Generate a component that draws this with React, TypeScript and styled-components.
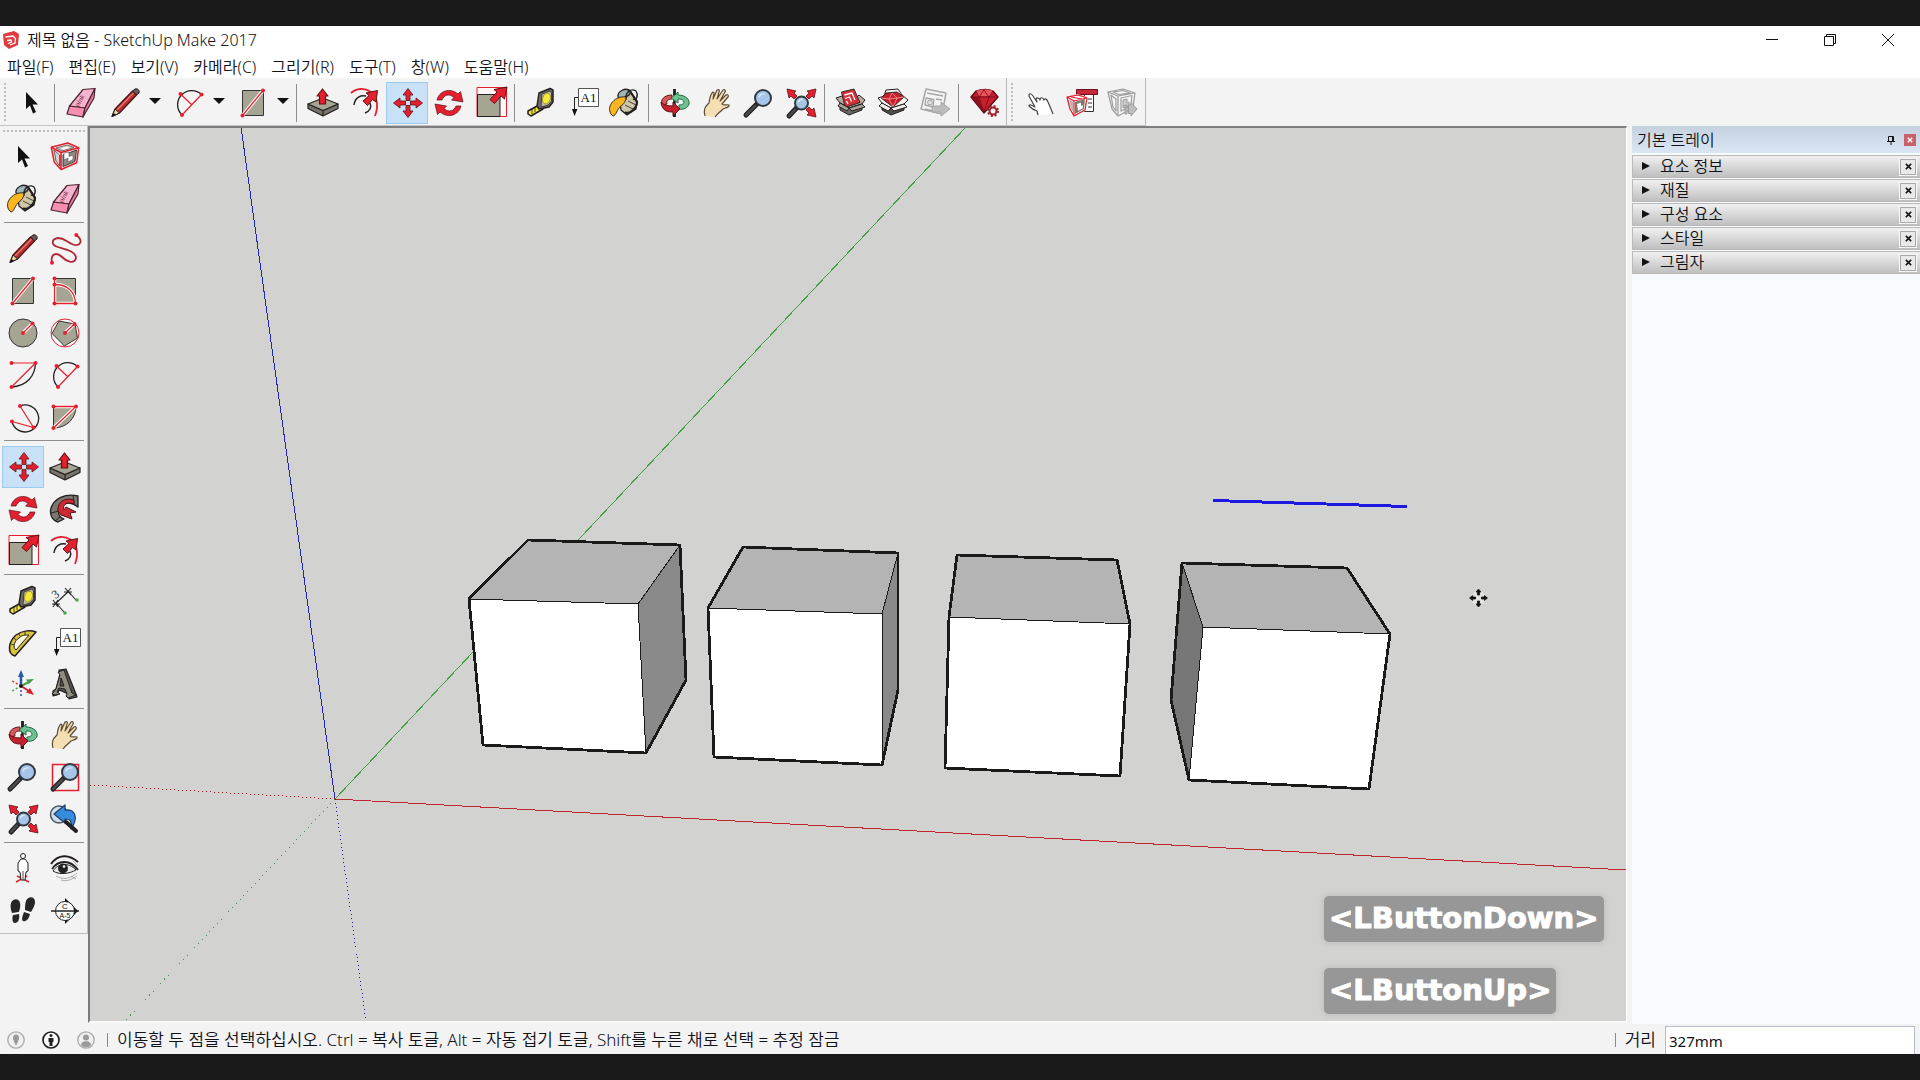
import React from "react";
import styled, { createGlobalStyle } from "styled-components";

const GlobalStyle = createGlobalStyle`
  *, *::before, *::after { box-sizing: border-box; }
  body { margin: 0; background: #1a1a1a; }
  button, input { font: inherit; color: inherit; }
`;

const RED = "#e5202e";
const DARK = "#231f20";
const CLAY = "#a6a493";

/* ---------- icons ---------- */

const Svg = styled.svg`
  display: block;
  width: 32px;
  height: 32px;
  overflow: visible;
`;

const Dots = ({ at, r = 2 }: { at: number[][]; r?: number }) => (
  <g fill={RED}>
    {at.map(([x, y]) => (
      <circle key={`${x}-${y}`} cx={x} cy={y} r={r} />
    ))}
  </g>
);

const Lens = ({ x = 20, y = 11, r = 8, hx = 3, hy = 28 }) => (
  <g>
    <path d={`M${x - r * 0.7} ${y + r * 0.7}L${hx} ${hy}`} stroke={DARK} strokeWidth="5" strokeLinecap="round" />
    <path d={`M${x - r * 0.7 - 2} ${y + r * 0.7 + 2}L${hx} ${hy}`} stroke="#4b4b4d" strokeWidth="2.5" strokeLinecap="round" />
    <circle cx={x} cy={y} r={r} fill="#a5c6e8" stroke="#33383f" strokeWidth="2" />
    <path d={`M${x - r * 0.5} ${y - r * 0.1}A${r * 0.6} ${r * 0.6} 0 0 1 ${x + r * 0.2} ${y - r * 0.5}`} stroke="#d7e7f6" strokeWidth="1.5" fill="none" />
  </g>
);

const arrowUp = "M16 1.5L21 8H18V13.5H14V8H11Z";

const icons: Record<string, React.ReactNode> = {
  select: <path d="M11 5V22L15 18.500L18 26.500L21 25L17.500 17.500H23Z" fill="#111" />,
  component: (
    <g strokeLinejoin="round">
      <path d="M2.300 6.300L18.700 2L29.700 6.700L27.700 21.700L12 28.500L5.300 21.300Z" fill="#f4e9e9" stroke={RED} strokeWidth="1.500" />
      <path d="M14 14L27.500 9L26 20.500L14 25.500Z" fill="#8e8b84" stroke={DARK} strokeWidth=".8" />
      <path d="M15 12V19L19 17V21L24 18.500V14L20 15.500V11Z" fill="#fff" stroke="#555" strokeWidth=".6" />
      <path d="M5 9L10.500 14L10.500 25L7 20Z" fill="#d9d4ce" stroke="#444" strokeWidth=".8" />
      <path d="M7 7L18 4L25 6.500L13 10Z" fill="#c9c6bf" stroke="#444" strokeWidth=".7" />
      <path d="M12 7L18 5.500L21 7L14 9Z" fill="#fff" />
      <path d="M2.300 6.300L12 11.500L29.700 6.700M12 11.500V28.500" fill="none" stroke={RED} strokeWidth="1.700" />
    </g>
  ),
  paint: (
    <g stroke={DARK} strokeLinejoin="round">
      <path d="M10 8L14 4L20 3L28 14L27 22L18 28L12 23Z" fill="#cfc7a8" strokeWidth="1.300" />
      <path d="M9 10C8 4 17 0 21 4C23 8 14 13 9 10Z" fill="#9db5b3" strokeWidth="1.300" />
      <path d="M21 4L28 15C28 22 19 28 16 25" fill="none" strokeWidth="2.200" />
      <path d="M17 13C16 5 22 1 27 4C30 9 27 14 24 12" fill="none" strokeWidth="1.300" />
      <path d="M17 10C11 9 5 12 2 17C-1 22 1 27 4 29C7 29 8 22 12 19C15 17 17 14 17 10Z" fill="#fbb521" strokeWidth=".9" />
      <path d="M16 18L24 22M19 14L27 18" strokeWidth=".8" fill="none" />
    </g>
  ),
  eraser: (
    <g stroke="#4a2430" strokeWidth="1.200" strokeLinejoin="round">
      <path d="M4.500 19L18 2.500L30 1.500L20 21Z" fill="#f6b3cd" />
      <path d="M4.500 19L20 21L18 30L2 27Z" fill="#f78fb3" />
      <path d="M20 21L30 1.500L29 11L18 30Z" fill="#e2799f" />
      <text x="9" y="18" fontSize="7" fontFamily="'Liberation Serif', serif" fontStyle="italic" stroke="none" fill="#6c2038" transform="rotate(-60 13 15)">pink</text>
    </g>
  ),
  pencil: (
    <g strokeLinejoin="round">
      <path d="M3 29.500L6 22L23.500 4L27.500 8L10.500 26Z" fill="#b92f2f" stroke="#4d1214" strokeWidth="1.200" />
      <path d="M8 23L24.500 6" stroke="#e97b70" strokeWidth="1.200" />
      <path d="M3 29.500L6 22L10.500 26Z" fill="#e8d3a1" stroke={DARK} />
      <path d="M3 29.500L4.500 26L7 28Z" fill="#111" />
      <path d="M23.500 4L26 2C29 1 31 4 30 6L27.500 8Z" fill="#6a5858" stroke={DARK} />
    </g>
  ),
  freehand: (
    <g>
      <path d="M27.300 2C35 8 31 14 24 11.500C17 9 16 5 9 5C2 6 2 12 9 14C15 16 27 18 27 25C25 32 17 28 13 24C8 19 1 20 3 29.700" fill="none" stroke="#b32634" strokeWidth="1.800" />
      <Dots at={[[27.3, 2], [3, 29.7]]} />
    </g>
  ),
  rect: (
    <g>
      <path d="M5.500 3.500H26.500V28.500H5.500Z" fill={CLAY} stroke="#333" />
      <path d="M26 3.500L5.500 28.500" stroke="#fff" strokeWidth="3.500" />
      <path d="M26 3.500L5.500 28.500" stroke={RED} strokeWidth="1.300" />
      <Dots at={[[26, 3.5], [5.5, 28.5]]} />
    </g>
  ),
  rotrect: (
    <g fill="none">
      <path d="M5.500 3.500H26.500V28.500H5.500Z" fill={CLAY} stroke="#333" />
      <path d="M5.500 9.500C19 9.500 26 17 26.500 28.500H5.500V4" stroke="#fff" strokeWidth="3.500" />
      <path d="M5.500 9.500C19 9.500 26 17 26.500 28.500H5.500V4" stroke={RED} strokeWidth="1.300" />
      <Dots at={[[5.5, 3.5], [5.5, 9.5], [5.5, 28.5], [26.5, 28.5]]} />
    </g>
  ),
  circle: (
    <g>
      <circle cx="16" cy="16" r="14" fill={CLAY} stroke="#333" />
      <path d="M16 16L25.500 6.500" stroke="#fff" strokeWidth="3.500" />
      <path d="M16 16L25.500 6.500" stroke={RED} strokeWidth="1.300" />
      <Dots at={[[16, 16], [25.5, 6.5]]} />
    </g>
  ),
  polygon: (
    <g>
      <circle cx="16" cy="16" r="14" fill="#fff" stroke={RED} />
      <path d="M10 4L26 7L28.500 21L15.500 29L3 16.500Z" fill={CLAY} stroke="#333" />
      <path d="M16 16L25.500 7" stroke="#fff" strokeWidth="3.500" />
      <path d="M16 16L25.500 7" stroke={RED} strokeWidth="1.300" />
      <Dots at={[[16, 16], [25.5, 7]]} />
    </g>
  ),
  arc: (
    <g fill="none">
      <path d="M28.500 4C28 17 20 27 4.500 28" stroke={DARK} strokeWidth="1.300" />
      <path d="M4.500 4H28.500L4.500 28" stroke={RED} strokeWidth="1.200" />
      <Dots at={[[4.5, 4], [28.5, 4], [4.5, 28]]} />
    </g>
  ),
  arc2: (
    <g fill="none">
      <path d="M28.500 7.500A14 14 0 1 0 9 28" stroke={DARK} strokeWidth="1.300" />
      <path d="M28.500 7.500L9 28M7.500 7L18.500 17.500" stroke={RED} strokeWidth="1.200" />
      <Dots at={[[28.5, 7.5], [9, 28], [7.5, 7]]} />
    </g>
  ),
  arc3: (
    <g fill="none">
      <path d="M13 5A13.500 13.500 0 1 1 5 20.500" stroke={DARK} strokeWidth="1.300" />
      <path d="M13 5L26.500 26.500L5 20.500" stroke={RED} strokeWidth="1.200" />
      <Dots at={[[13, 5], [5, 20.5], [26.5, 26.5]]} />
    </g>
  ),
  pie: (
    <g>
      <path d="M4.500 5.500H27C27 17 18 27 4.500 27Z" fill={CLAY} stroke="#333" />
      <path d="M4.500 5.500H27L4.500 27" fill="none" stroke="#fff" strokeWidth="3.500" />
      <path d="M4.500 5.500H27L4.500 27" fill="none" stroke={RED} strokeWidth="1.300" />
      <Dots at={[[4.5, 5.5], [27, 5.5], [4.5, 27]]} />
    </g>
  ),
  move: (
    <g fill={RED} stroke="#5d1016" strokeWidth=".8" transform="translate(1 0)">
      {[0, 90, 180, 270].map((a) => (
        <path key={a} d={arrowUp} transform={`rotate(${a} 16 16)`} />
      ))}
    </g>
  ),
  pushpull: (
    <g stroke={DARK} strokeWidth="1.200" strokeLinejoin="round">
      <path d="M1 17L16 23.500L31 17V21.500L16 29L1 21.500Z" fill="#77756a" />
      <path d="M16 23.500V29" />
      <path d="M1 17L16 11L31 17L16 23.500Z" fill={CLAY} />
      <path d="M15.500 2L21 9H18.500V17H12.500V9H10Z" fill={RED} stroke="#5d1016" />
    </g>
  ),
  rotate: (
    <g fill={RED} stroke="#5d1016" strokeWidth=".7" strokeLinejoin="round">
      <path d="M4 13C6 4 17 0 25 7L27.500 4.500L30 15L18.500 13L21 10.500C16 6 11 8 9 13Z" />
      <path d="M28 19C26 28 15 32 7 25L4.500 27.500L2 17L13.500 19L11 21.500C16 26 21 24 23 19Z" />
    </g>
  ),
  followme: (
    <g strokeLinejoin="round">
      <path d="M29 3C17 0 4 5 1.500 17C1 23 4 28 9 29L15 26C9 24 8 18 12 13C17 8 24 10 29 14Z" fill="#79786f" stroke={DARK} strokeWidth="1.300" />
      <path d="M24 2L25 12M2 20L10 18M6 28L12 23" stroke={DARK} strokeWidth="1" />
      <path d="M25 7C16 4 8 9 9 18L12 22L23 26L21 20L27 19L17 14L15 17C13 12 18 8 25 11Z" fill="#cf2a31" stroke="#541015" />
    </g>
  ),
  scale: (
    <g>
      <path d="M2 .5H31.500V29.500H2Z" fill="#fff6f6" stroke={RED} />
      <path d="M2.500 7.500H25V29.500H2.500Z" fill={CLAY} stroke="#222" />
      <path d="M32 0L29.500 12L26 9L19.500 16.500L15 12.500L22 5L19 2.500Z" fill={RED} stroke="#5d1016" strokeLinejoin="round" />
    </g>
  ),
  offset: (
    <g fill="none">
      <path d="M2 6C13 -4 35 5 26 29" stroke={RED} strokeWidth="1.800" />
      <path d="M5 18C6 10 12 8 17 9M21 16C23 20 21 24 16 26" stroke={DARK} strokeWidth="1.500" />
      <path d="M28.500 3.500L27 15L23.500 12.500L18.500 18.500L14 14L20 8.500L17 6Z" fill={RED} stroke="#5d1016" strokeLinejoin="round" />
    </g>
  ),
  tape: (
    <g stroke={DARK} strokeLinejoin="round">
      <path d="M3 24L14 18L18 22L6 29L3 27Z" fill="#f2e33a" strokeWidth="1.500" />
      <path d="M7 22V27M10 20.500V25" strokeWidth=".8" />
      <path d="M14 6L25 1.500L28 3V15L24 20L14 22L12 19Z" fill="#6f6c66" strokeWidth="1.500" />
      <path d="M17 7L25 4L26.500 6V14L23 18L16 20Z" fill="#bdb9ac" strokeWidth=".7" />
      <ellipse cx="21.500" cy="11.500" rx="3.800" ry="5.500" fill="#f5ea3c" stroke="#9d941b" strokeWidth=".8" transform="rotate(18 21.500 11.500)" />
    </g>
  ),
  dimension: (
    <g stroke={DARK} fill="none">
      <path d="M5 20L20 6M7 18L15 27M18 5L27 15M3 19H11M4 15L9 22M4 22L9 15M15 7H23M16 3L22 10M16 10L22 3" strokeWidth="1.100" />
      <text x="3" y="12" fontSize="12" fontFamily="'Liberation Serif', serif" fill={DARK} stroke="none" transform="rotate(-38 8 8)">3</text>
      <g fill="#45a84f" stroke="none">
        <circle cx="28" cy="15" r="1.800" />
        <circle cx="16" cy="28" r="1.800" />
      </g>
    </g>
  ),
  protractor: (
    <g strokeLinejoin="round" stroke={DARK}>
      <path d="M29 5L8 29C0 27 1 15 9 8C16 3 24 3 29 5Z" fill="#d9c53a" strokeWidth="1.500" />
      <path d="M22 8L9 23C5 20 8 13 12 11C15 8 18 8 22 8Z" fill="#fffbe6" />
      <path d="M4 17L7 18M7 11L9 13M12 7L13 9M18 5V8" strokeWidth=".8" />
    </g>
  ),
  text: (
    <g>
      <path d="M11.500 1.500H31.500V19.500H11.500Z" fill="#fff" stroke="#555" />
      <path d="M11 10.500H7.500V24" fill="none" stroke={DARK} />
      <path d="M5 22H10.500L7.500 29Z" fill="#111" />
      <text x="21.500" y="15" fontSize="13" textAnchor="middle" fontFamily="'Liberation Serif', serif" fill="#111">A1</text>
    </g>
  ),
  axes: (
    <g strokeWidth="1.500" fill="none" transform="translate(-2 1)">
      <path d="M16 16V6" stroke="#2757a5" strokeWidth="2.500" />
      <path d="M13 7L16 0L19 7Z" fill="#2757a5" />
      <path d="M16 16L24 12" stroke="#43a047" strokeWidth="2" />
      <path d="M29 9L21 9.500L24 14Z" fill="#43a047" />
      <path d="M16 16L24 21" stroke="#d3232f" strokeWidth="2" />
      <path d="M29 25L21 22.500L25 18Z" fill="#d3232f" />
      <path d="M16 16V28" stroke="#2757a5" strokeDasharray="2 2" />
      <path d="M16 16L7 21" stroke="#43a047" strokeDasharray="2 2" />
      <path d="M16 16L7 11" stroke="#d3232f" strokeDasharray="2 2" />
      <circle cx="16" cy="16" r="1.800" fill="#111" />
    </g>
  ),
  text3d: (
    <g stroke={DARK} strokeLinejoin="round" fillRule="evenodd">
      <path d="M10 1L17 0L27 25L28 28L20 30V26L17 24L10 21L8 26L4 27V22L7 20L11 5Z" fill="#55544e" strokeWidth="1.200" />
      <path d="M9 3L15 1L23 24L27 26L19 29L17 27L18 25L16 20L10 19L8 23L11 25L6 26L3 25L7 20L11 6ZM12 9L11 17L15 17Z" fill="#8f8d80" strokeWidth="1" />
    </g>
  ),
  orbit: (
    <g strokeLinejoin="round" strokeWidth="1">
      <path d="M15.500 2V30" stroke="#222" strokeWidth="2.500" />
      <path d="M13 8C5 8 1 13 3 18L8 17C7 14 9 12 13 12Z" fill="#d9585c" stroke="#5a1317" />
      <path d="M12 11L19 5V8C27 8 31 13 30 17C29 21 24 23 20 22V18C24 18 25 16 25 15C24 12 22 12 19 12V16Z" fill="#6fc092" stroke="#1e6a3b" />
      <path d="M2 15C3 25 10 25 14 25V29L21 22L14 15V19C9 19 5 18 2 15Z" fill="#c6202e" stroke="#5a1317" />
      <path d="M15.500 2V8M15.500 27V30" stroke="#222" strokeWidth="2.500" />
    </g>
  ),
  pan: (
    <path
      d="M4 29C2 21 5 19 8 16C9 11 9 7 12 5L13 6L12 12L16 3C18 2 19 3 18 5L16 12L22 3C24 2 25 4 24 5L19 14L25 8C27 7 28 9 27 10L21 17C22 19 26 17 28 18C29 20 24 21 22 22C18 26 16 27 14 30"
      fill="#f4dfb3"
      stroke="#5c4a3a"
      strokeWidth="1.200"
      strokeLinejoin="round"
    />
  ),
  zoom: <Lens />,
  zoomwin: (
    <g>
      <path d="M3.500 3.500H29.500V29.500H3.500Z" fill="none" stroke={RED} strokeWidth="1.500" />
      <Lens x={21} y={11} hx={4} hy={28} />
    </g>
  ),
  zoomext: (
    <g>
      <Lens x={16.5} y={16} r={6.5} hx={4} hy={29} />
      <g fill={RED} stroke="#5d1016" strokeWidth=".8" strokeLinejoin="round">
        <path d="M2 2L11 4L9 6L12 9L9 12L6 9L4 11Z" />
        <path d="M31 2L22 4L24 6L21 9L24 12L27 9L29 11Z" />
        <path d="M31 30L22 28L24 26L21 23L24 20L27 23L29 21Z" />
      </g>
    </g>
  ),
  previous: (
    <g strokeLinejoin="round">
      <circle cx="10" cy="11.500" r="8.500" fill="#cfdeeb" stroke="#4c5661" strokeWidth="1.500" />
      <path d="M5 11L16 2V7C26 6 30 14 22 26C23 17 21 16 16 16V20Z" fill="#378bdd" stroke="#1b3d67" strokeWidth="1.200" />
      <path d="M17 19L27 28" stroke={DARK} strokeWidth="4" strokeLinecap="round" />
    </g>
  ),
  person: (
    <g fill="none" strokeLinejoin="round">
      <path d="M9 29L20 23M10 23L22 29" stroke={RED} strokeWidth="1.500" />
      <circle cx="16" cy="3" r="2.500" fill="#fff" stroke={DARK} />
      <path d="M14 6H18L21 10V18L19 19L18 27H14L13 19L11 18V10Z" fill="#fff" stroke={DARK} />
      <path d="M16 18V27" stroke={DARK} strokeWidth=".8" />
    </g>
  ),
  eye: (
    <g fill="none" stroke={DARK}>
      <path d="M2 11C9 1 20 1 29 9" strokeWidth="2" />
      <path d="M4 18C9 10 20 9 27 17C20 21 10 22 4 18Z" fill="#e8e8e8" strokeWidth="1" />
      <path d="M3 16C9 7 21 6 29 17" strokeWidth="1.800" />
      <circle cx="14" cy="15.500" r="4.500" fill="#222" />
      <circle cx="15" cy="13.500" r="1.300" fill="#fff" stroke="none" />
      <path d="M7 23C14 27 21 26 28 20M12 27C18 29 24 26 28 23M24 8L29 13M22 23L27 26" stroke="#999" strokeWidth=".8" />
    </g>
  ),
  feet: (
    <g fill="#262626">
      <path d="M4 8C6 3 12 3 13 8C14 12 12 16 12 17L5 18C4 15 3 12 4 8Z" />
      <path d="M6 20L12 19C13 24 11 28 8 28C5 28 5 23 6 20Z" />
      <path d="M19 6C21 1 28 1 28 7C28 11 25 15 24 17L18 15C18 12 18 9 19 6Z" />
      <path d="M17 17L23 19C22 24 19 27 16 26C14 24 16 20 17 17Z" />
      <path d="M6 19L12 18M17.500 16L23.500 18" stroke="#fff" strokeWidth=".8" />
    </g>
  ),
  section: (
    <g>
      <path d="M16 3L29 16L16 29Z" fill="#111" />
      <circle cx="16" cy="16" r="9.500" fill="#fff" stroke="#222" />
      <path d="M2 16H30" stroke="#222" strokeWidth="1.500" />
      <text x="16" y="14" fontSize="8" textAnchor="middle" fontFamily="'Liberation Sans', sans-serif" fill="#111">C</text>
      <text x="16" y="23" fontSize="7" textAnchor="middle" fontFamily="'Liberation Sans', sans-serif" fill="#111">A-5</text>
    </g>
  ),
  warehouse: (
    <g stroke={DARK} strokeLinejoin="round">
      <path d="M5 16L1 11L7 9L13 12L20 12L24 8L30 13L27 17L14 21Z" fill="#b3ada1" />
      <path d="M6.500 5L19 2L25 15.500L10 20.500Z" fill="#d4303a" strokeWidth=".9" />
      <path d="M9.500 8L17 6L20 13M10 11.500L14.500 10L16.500 14.500M13 17L11.500 14" fill="none" stroke="#fff" strokeWidth="1.300" />
      <path d="M5 16L14 21L27 17V23L14 28L5 23Z" fill="#6a665f" />
      <path d="M14 21L17 24L30 20L27 17Z" fill="#a9a397" />
      <path d="M5 16L3 19L12 24L14 21Z" fill="#a9a397" />
    </g>
  ),
  extension: (
    <g stroke={DARK} strokeLinejoin="round">
      <path d="M5 16L1 11L7 9L9 3L21 2L25 8L31 13L27 17L14 21Z" fill="#f7f5f1" />
      <path d="M4 11L9 6L20 5L27 10L16 20Z" fill="#c81f2d" strokeWidth=".9" />
      <path d="M4 11L12 12L20 11L27 10M12 12L16 20L20 11L15 6Z" fill="none" stroke="#ff9d9a" strokeWidth=".8" />
      <path d="M5 17L14 21L27 18V23L14 28L5 23Z" fill="#504d48" />
      <path d="M14 21L17 24L30 20L27 17Z" fill="#f1eee8" />
      <path d="M5 16L2 19L11 24L14 21Z" fill="#f1eee8" />
    </g>
  ),
  layout: (
    <g stroke="#a6a6a6" strokeLinejoin="round" fill="#f4f4f4">
      <path d="M7 2L27 6L23 27L2 22Z" strokeWidth="1.500" />
      <path d="M8 6L24 9M7 11L15 12.500L14 20L6 18ZM17 12L23 13M6 22L14 24" fill="none" strokeWidth="1.300" />
      <circle cx="11" cy="15.500" r="2.500" fill="#ddd" />
      <path d="M13 19H22V15L31 22L22 29V25H13Z" fill="#bdbdbd" />
    </g>
  ),
  ruby: (
    <g strokeLinejoin="round">
      <path d="M2 10L7 4C12 2 20 2 24 4L29 10L15 26Z" fill="#c81f2d" stroke="#5c0c14" strokeWidth="1.300" />
      <path d="M7 4C12 2 20 2 24 4L21 9H9Z" fill="#e8555a" />
      <path d="M2 10L9 10L15 26Z" fill="#8f101d" />
      <path d="M2 10H29M7 4L10 10L15 3L20 10L24 4M10 10L15 25L20 10" fill="none" stroke="#6f0d17" strokeWidth=".8" />
      <circle cx="24" cy="24" r="3.500" fill="#f4f4f4" stroke="#a3202b" strokeWidth="2" />
      <circle cx="24" cy="24" r="5" fill="none" stroke="#a3202b" strokeWidth="2" strokeDasharray="2 1.927" />
    </g>
  ),
  interact: (
    <path
      d="M14 28L13 24C10 23 7 21 5 19C5 17 8 18 11 20L5 9C5 6 7 6 9 9L13 15L12 12C13 10 15 11 16 13C16 10 19 10 20 13C21 11 23 12 24 15L27 22L29 27"
      fill="#fff"
      stroke="#444"
      strokeWidth="1.200"
      strokeLinejoin="round"
    />
  ),
  compOptions: (
    <g strokeLinejoin="round">
      <path d="M18.500 7H27.500V24.500H18.500Z" fill="#fff" stroke="#333" />
      <path d="M10.500 2.500H31.500V7.500H10.500Z" fill="#c9273a" stroke="#6f0f19" />
      <path d="M22 12H26M22 16H26M22 20H26" stroke="#333" />
      <path d="M1 10L12 7.500L21 10.500L19 23L8 29L4 22Z" fill="#fff" stroke="#f2a3a6" strokeWidth="1" />
      <path d="M9 15L19 12L18 22L9 27Z" fill="#7d7870" />
      <path d="M11 17L15 15.500V19L17 18V21L12 24Z" fill="#fff" />
      <path d="M3 12L7 15V25L5 21Z" fill="#b9b3aa" />
      <path d="M1 10L12 8L21 11L8 14ZM1 10L4 22L8 29V14M8 29L19 23L21 11M5 10L16 12" fill="none" stroke={RED} strokeWidth="1.200" />
    </g>
  ),
  compAttrs: (
    <g stroke="#9c9c9c" strokeLinejoin="round" fill="none">
      <path d="M0 5L15 2L27 6L25 21L10 29L4 22Z" fill="#f4f4f4" strokeWidth="1.200" />
      <path d="M0 5L10 9L27 6M10 9V29M3 8L8 12V24L5 20ZM5 5L15 3.500L22 6L11 7.500ZM13 11L24 8.500L23 19L13 24Z" strokeWidth="1.200" />
      <path d="M15 13L19 12V16L21 15V19L15 21Z" fill="#ccc" />
      <path d="M17 18H19V27H17ZM20.500 18H23V15.500L29 22L23 29V26.500H20.500Z" fill="#bdbdbd" />
    </g>
  ),
};

const Icon = ({ name }: { name: string }) => (
  <Svg viewBox="0 0 32 32" fill="none" aria-hidden="true">
    {icons[name]}
  </Svg>
);

/* ---------- window frame ---------- */

const Screen = styled.div`
  display: flex;
  flex-direction: column;
  height: 100vh;
  padding: 26px 0;
  background: #1a1a1a;
  color: #111118;
  font-family: "Noto Sans", "Noto Sans CJK KR", sans-serif;
  font-size: 16px;
  font-weight: 350;
  line-height: 20px;
`;

const Window = styled.div`
  flex: 1;
  min-height: 0;
  display: flex;
  flex-direction: column;
  background: #f3f3f4;
`;

const TitleBar = styled.header`
  display: flex;
  align-items: center;
  height: 30px;
  padding: 0 3px 2px;
  gap: 8px;
  background: #fff;
`;

const Title = styled.h1`
  flex: 1;
  margin: 0;
  font-size: 16px;
  font-weight: inherit;
  line-height: 20px;
`;

const Logo = styled.svg`
  width: 16px;
  height: 18px;
`;

const WindowButtons = styled.div`
  display: flex;
`;

const WindowButton = styled.button`
  display: grid;
  place-items: center;
  width: 58px;
  height: 28px;
  padding: 0;
  border: 0;
  background: none;

  svg {
    width: 14px;
    height: 14px;
    fill: none;
    stroke: #111;
  }
`;

const MenuBar = styled.nav`
  display: flex;
  gap: 15px;
  height: 22px;
  padding: 0 7px;
  background: #fff;
`;

const MenuButton = styled.button`
  padding: 0;
  border: 0;
  background: none;
  font-size: 16px;
  line-height: 20px;
  white-space: nowrap;
`;

/* ---------- toolbars ---------- */

const TopTools = styled.div`
  display: flex;
  height: 48px;
`;

const TopBar = styled.div`
  display: flex;
  align-items: center;
  padding: 2px 0 0 4px;
  border-right: 1px solid #b9b9b9;
  border-bottom: 1px solid #c4c4c4;
`;

const Grip = styled.span<{ $flat?: boolean }>`
  flex: none;
  width: ${(p) => (p.$flat ? "82px" : "2px")};
  height: ${(p) => (p.$flat ? "2px" : "40px")};
  margin: ${(p) => (p.$flat ? "4px 0 4px 3px" : "0 4px 0 0")};
  background: repeating-linear-gradient(${(p) => (p.$flat ? "90deg" : "180deg")}, #bdbdbd 0 2px, transparent 2px 4px);
`;

const Tool = styled.button<{ $active?: boolean }>`
  display: grid;
  place-items: center;
  width: 42px;
  height: 42px;
  padding: 0;
  border: 1px solid ${(p) => (p.$active ? "#9ccbf2" : "transparent")};
  background: ${(p) => (p.$active ? "#c9e1f7" : "none")};
`;

const Split = styled.span`
  display: flex;
  padding-left: 2px;
`;

const DropButton = styled.button`
  display: flex;
  align-items: center;
  width: 20px;
  padding: 0 0 4px 3px;
  border: 0;
  background: none;

  &::before {
    content: "";
    border: 6px solid transparent;
    border-top-color: #111;
    border-bottom-width: 0;
  }
`;

const Divider = styled.span<{ $flat?: boolean }>`
  flex: none;
  background: #8f8f8f;
  width: ${(p) => (p.$flat ? "80px" : "1px")};
  height: ${(p) => (p.$flat ? "1px" : "38px")};
  margin: ${(p) => (p.$flat ? "2px 0 5px 4px" : "0 5px 0 2px")};
`;

const DynamicTools = styled.div`
  display: flex;
  padding-left: 2px;
`;

const Body = styled.div`
  flex: 1;
  min-height: 0;
  display: flex;
`;

const SideBar = styled.div`
  flex: none;
  align-self: flex-start;
  width: 88px;
  padding-bottom: 1px;
  display: flex;
  flex-direction: column;
  border-right: 1px solid #bdbdbd;
  border-bottom: 1px solid #bdbdbd;
`;

const ToolGrid = styled.div`
  display: grid;
  grid-template-columns: 42px 42px;
  padding-left: 2px;
`;

/* ---------- drawing area ---------- */

const Viewport = styled.main`
  position: relative;
  flex: 1;
  min-width: 0;
  margin-bottom: 1px;
  border-left: 2px solid #7d7d7d;
  border-top: 2px solid #7d7d7d;
  border-right: 1px solid #fff;
  border-bottom: 2px solid #f9f9f9;
  background: #d2d2d0;
  overflow: hidden;
`;

const Scene = styled.svg`
  display: block;
  width: 100%;
  height: 100%;
`;

const KeyLog = styled.div`
  position: absolute;
  right: 22px;
  bottom: 7px;
  width: 280px;
  display: flex;
  flex-direction: column;
  align-items: flex-start;
  gap: 26px;
`;

const KeyCap = styled.span`
  padding: 0 5px 2px;
  border-radius: 5px;
  background: #979797;
  box-shadow: 0 0 4px 2px #c3c3c2;
  color: #fff;
  font-family: "DejaVu Sans", sans-serif;
  font-weight: 700;
  font-size: 29px;
  line-height: 44px;
  -webkit-text-stroke: 1px #fff;
  white-space: nowrap;
`;

/* ---------- tray ---------- */

const Tray = styled.aside`
  flex: none;
  width: 288px;
  margin-left: 5px;
  background: #f7faff;
`;

const TrayHeader = styled.div`
  display: flex;
  align-items: center;
  gap: 7px;
  height: 27px;
  margin-bottom: 2px;
  padding: 0 4px 0 5px;
  background: linear-gradient(#c6d1e0, #dbe6f5);
`;

const TrayTitle = styled.h2`
  flex: 1;
  margin: 0;
  font-size: 16px;
  font-weight: inherit;
  line-height: 20px;
`;

const PinButton = styled.button`
  width: 12px;
  height: 12px;
  padding: 0;
  border: 0;
  background: none;

  svg {
    display: block;
  }
`;

const CloseTray = styled.button`
  display: grid;
  place-items: center;
  width: 12px;
  height: 12px;
  padding: 0;
  border: 0;
  background: #c7626a;
  color: #fff;
`;

const Panel = styled.section`
  display: flex;
  align-items: center;
  height: 23px;
  margin-bottom: 1px;
  padding-right: 4px;
  border: 1px solid #bababa;
  border-right: 0;
  background: linear-gradient(#f1f1f1, #bfbfbf);
`;

const PanelToggle = styled.button`
  flex: 1;
  display: flex;
  align-items: center;
  gap: 10px;
  padding: 0 9px 2px;
  border: 0;
  background: none;
  font-size: 16px;
  line-height: 20px;

  &::before {
    content: "";
    border: 4px solid transparent;
    border-left: 8px solid #111;
    border-right: 0;
  }
`;

const PanelClose = styled.button`
  display: grid;
  place-items: center;
  width: 16px;
  height: 16px;
  padding: 0;
  border: 1px solid #aaa;
  outline: 1px solid #f5f5f5;
  background: #e9e9e9;
`;

/* ---------- status bar ---------- */

const StatusBar = styled.footer`
  flex: none;
  display: flex;
  align-items: center;
  gap: 9px;
  height: 30px;
  padding: 2px 5px 0 7px;
`;

const StatusIcons = styled.div`
  display: flex;
  gap: 17px;
  padding-right: 3px;

  svg {
    width: 18px;
    height: 18px;
  }
`;

const StatusRule = styled.span`
  width: 1px;
  height: 14px;
  background: #8a8a8a;
`;

const StatusText = styled.p`
  flex: 1;
  margin: 0;
  font-size: 17px;
  line-height: 20px;
  white-space: nowrap;
`;

const MeasureLabel = styled.label`
  font-size: 17px;
`;

const Measure = styled.input`
  align-self: flex-end;
  width: 250px;
  height: 28px;
  padding: 0 3px;
  border: 1px solid #b4bccb;
  border-bottom: 0;
  background: #fff;
  font-size: 15px;
  font-weight: 400;
`;

/* ---------- data ---------- */

const menus = ["파일(F)", "편집(E)", "보기(V)", "카메라(C)", "그리기(R)", "도구(T)", "창(W)", "도움말(H)"];

const topGroups: { name: string; label: string; drop?: boolean; active?: boolean }[][] = [
  [{ name: "select", label: "선택" }],
  [
    { name: "eraser", label: "지우개" },
    { name: "pencil", label: "선", drop: true },
    { name: "arc2", label: "호", drop: true },
    { name: "rect", label: "직사각형", drop: true },
  ],
  [
    { name: "pushpull", label: "밀기/끌기" },
    { name: "offset", label: "오프셋" },
    { name: "move", label: "이동", active: true },
    { name: "rotate", label: "회전" },
    { name: "scale", label: "배율" },
  ],
  [
    { name: "tape", label: "줄자" },
    { name: "text", label: "텍스트" },
    { name: "paint", label: "페인트통" },
  ],
  [
    { name: "orbit", label: "궤도" },
    { name: "pan", label: "이동 보기" },
    { name: "zoom", label: "확대/축소" },
    { name: "zoomext", label: "범위 확대" },
  ],
  [
    { name: "warehouse", label: "3D Warehouse" },
    { name: "extension", label: "Extension Warehouse" },
    { name: "layout", label: "LayOut" },
  ],
  [{ name: "ruby", label: "확장 관리자" }],
];

const dynamicTools = [
  { name: "interact", label: "상호 작용" },
  { name: "compOptions", label: "구성 요소 옵션" },
  { name: "compAttrs", label: "구성 요소 속성" },
];

const sideGroups = [
  ["select", "component", "paint", "eraser"],
  ["pencil", "freehand", "rect", "rotrect", "circle", "polygon", "arc", "arc2", "arc3", "pie"],
  ["move", "pushpull", "rotate", "followme", "scale", "offset"],
  ["tape", "dimension", "protractor", "text", "axes", "text3d"],
  ["orbit", "pan", "zoom", "zoomwin", "zoomext", "previous"],
  ["person", "eye", "feet", "section"],
];

const panels = ["요소 정보", "재질", "구성 요소", "스타일", "그림자"];

const boxes = [
  {
    outline: "528,540 680,545 686,680 646,753 483,745 469,599",
    top: "528,540 680,545 638,604 469,599",
    front: "469,599 638,604 646,753 483,745",
    side: "680,545 686,680 646,753 638,604",
    shade: "#8a8a8a",
  },
  {
    outline: "743,547 898,553 898,690 882,765 714,757 708,608",
    top: "743,547 898,553 882,614 708,608",
    front: "708,608 882,614 882,765 714,757",
    side: "898,553 898,690 882,765 882,614",
    shade: "#8a8a8a",
  },
  {
    outline: "957,555 1117,560 1130,624 1120,776 945,768 949,617",
    top: "957,555 1117,560 1130,624 949,617",
    front: "949,617 1130,624 1120,776 945,768",
    side: "",
    shade: "",
  },
  {
    outline: "1182,563 1347,568 1390,634 1369,789 1189,780 1171,700",
    top: "1182,563 1347,568 1390,634 1203,627",
    front: "1203,627 1390,634 1369,789 1189,780",
    side: "1182,563 1203,627 1189,780 1171,700",
    shade: "#777",
  },
];

const Cross = ({ size }: { size: number }) => (
  <svg width={size} height={size} viewBox="0 0 8 8" fill="none" stroke="currentColor" strokeWidth="1.800" aria-hidden="true">
    <path d="M1 1L7 7M7 1L1 7" />
  </svg>
);

export default function App() {
  return (
    <Screen>
      <GlobalStyle />
      <Window>
        <TitleBar>
          <Logo viewBox="0 0 16 18" aria-hidden="true">
            <path d="M0 3L11 0L16 3L15 14L6 18L1 14Z" fill="#e0393e" />
            <path d="M2.500 6L10 5L12.500 7.500L12 12L7 14M4 9.500L8 9L8.500 11L5 12.500" fill="none" stroke="#fff" strokeWidth="1.300" />
          </Logo>
          <Title>제목 없음 - SketchUp Make 2017</Title>
          <WindowButtons>
            <WindowButton aria-label="최소화">
              <svg viewBox="0 0 14 14"><path d="M1 6.500H13" /></svg>
            </WindowButton>
            <WindowButton aria-label="이전 크기로">
              <svg viewBox="0 0 14 14"><path d="M1.500 3.500H10.500V12.500H1.500ZM3.500 3V1.500H12.500V10.500H11" /></svg>
            </WindowButton>
            <WindowButton aria-label="닫기">
              <svg viewBox="0 0 14 14"><path d="M1 1L13 13M13 1L1 13" /></svg>
            </WindowButton>
          </WindowButtons>
        </TitleBar>
        <MenuBar>
          {menus.map((m) => (
            <MenuButton key={m}>{m}</MenuButton>
          ))}
        </MenuBar>
        <TopTools>
          <TopBar>
            <Grip />
            {topGroups.map((group, i) => (
              <React.Fragment key={i}>
                {i > 0 && <Divider />}
                {group.map((t) =>
                  t.drop ? (
                    <Split key={t.name}>
                      <Tool aria-label={t.label}>
                        <Icon name={t.name} />
                      </Tool>
                      <DropButton aria-label={`${t.label} 더 보기`} />
                    </Split>
                  ) : (
                    <Tool key={t.name} aria-label={t.label} $active={t.active}>
                      <Icon name={t.name} />
                    </Tool>
                  )
                )}
              </React.Fragment>
            ))}
          </TopBar>
          <TopBar>
            <Grip />
            <DynamicTools>
              {dynamicTools.map((t) => (
                <Tool key={t.name} aria-label={t.label}>
                  <Icon name={t.name} />
                </Tool>
              ))}
            </DynamicTools>
          </TopBar>
        </TopTools>
        <Body>
          <SideBar>
            <Grip $flat />
            {sideGroups.map((group, i) => (
              <React.Fragment key={i}>
                {i > 0 && <Divider $flat />}
                <ToolGrid>
                  {group.map((name) => (
                    <Tool key={name} aria-label={name} $active={name === "move"}>
                      <Icon name={name} />
                    </Tool>
                  ))}
                </ToolGrid>
              </React.Fragment>
            ))}
          </SideBar>
          <Viewport>
            <Scene viewBox="90 128 1536 893" preserveAspectRatio="xMinYMin slice" shapeRendering="crispEdges" fill="none">
              <path d="M335 799L241 127" stroke="#2626b4" />
              <path d="M335 799L966 127" stroke="#3f9f3f" />
              <path d="M335 799L1626 870" stroke="#c0272d" />
              <path d="M335 799L90 785" stroke="#a01c1c" strokeDasharray="1 3" />
              <path d="M335 799L366 1022" stroke="#1c1ca0" strokeDasharray="1 3" />
              <path d="M335 799L124 1022" stroke="#4f8f4f" strokeDasharray="1 4.500" />
              {boxes.map((b) => (
                <g key={b.outline} stroke="#1a1a1a" strokeLinejoin="round">
                  <polygon points={b.top} fill="#b4b4b4" />
                  {b.side && <polygon points={b.side} fill={b.shade} />}
                  <polygon points={b.front} fill="#fff" />
                  <polygon points={b.outline} strokeWidth="2.800" />
                </g>
              ))}
              <path d="M1213 500.500L1407 506.500" stroke="#1c18e0" strokeWidth="3" />
              <g transform="translate(1478.500 598)" shapeRendering="auto">
                <path d="M0 -10L10 0L0 10L-10 0Z" fill="#e2e2e0" />
                {[0, 90, 180, 270].map((a) => (
                  <path key={a} d="M0 -9L2.500 -6H1V-3H-1V-6H-2.500Z" fill="#111" stroke="#111" strokeWidth=".8" transform={`rotate(${a})`} />
                ))}
              </g>
            </Scene>
            <KeyLog>
              <KeyCap>&lt;LButtonDown&gt;</KeyCap>
              <KeyCap>&lt;LButtonUp&gt;</KeyCap>
            </KeyLog>
          </Viewport>
          <Tray>
            <TrayHeader>
              <TrayTitle>기본 트레이</TrayTitle>
              <PinButton aria-label="고정">
                <svg width="12" height="12" viewBox="0 0 12 12" fill="none" stroke="#111" aria-hidden="true">
                  <path d="M3.500 7V2.500H8.500V7M7.500 2V7M2 7.500H10M6 8V11" />
                </svg>
              </PinButton>
              <CloseTray aria-label="트레이 닫기">
                <Cross size={6} />
              </CloseTray>
            </TrayHeader>
            {panels.map((p) => (
              <Panel key={p}>
                <PanelToggle>{p}</PanelToggle>
                <PanelClose aria-label={`${p} 닫기`}>
                  <Cross size={7} />
                </PanelClose>
              </Panel>
            ))}
          </Tray>
        </Body>
        <StatusBar>
          <StatusIcons>
            <svg viewBox="0 0 18 18" aria-hidden="true">
              <circle cx="9" cy="9" r="8.200" fill="#f0f0f0" stroke="#aaa" strokeWidth="1.300" />
              <path d="M9 15L6 8C5 2 13 2 12 8Z" fill="#999" />
            </svg>
            <svg viewBox="0 0 18 18" aria-hidden="true">
              <circle cx="9" cy="9" r="8" fill="#fff" stroke="#222" strokeWidth="1.700" />
              <circle cx="9" cy="4.500" r="1.500" fill="#222" />
              <path d="M6.500 7H11.500V11H10.500V15H7.500V11H6.500Z" fill="#222" />
            </svg>
            <svg viewBox="0 0 18 18" aria-hidden="true">
              <circle cx="9" cy="9" r="8.200" fill="#f0f0f0" stroke="#aaa" strokeWidth="1.300" />
              <circle cx="9" cy="6.500" r="3" fill="#999" />
              <path d="M4 14C4 9 14 9 14 14C11 17 7 17 4 14Z" fill="#999" />
            </svg>
          </StatusIcons>
          <StatusRule />
          <StatusText>이동할 두 점을 선택하십시오. Ctrl = 복사 토글, Alt = 자동 접기 토글, Shift를 누른 채로 선택 = 추정 잠금</StatusText>
          <StatusRule />
          <MeasureLabel htmlFor="measure">거리</MeasureLabel>
          <Measure id="measure" defaultValue="327mm" />
        </StatusBar>
      </Window>
    </Screen>
  );
}
